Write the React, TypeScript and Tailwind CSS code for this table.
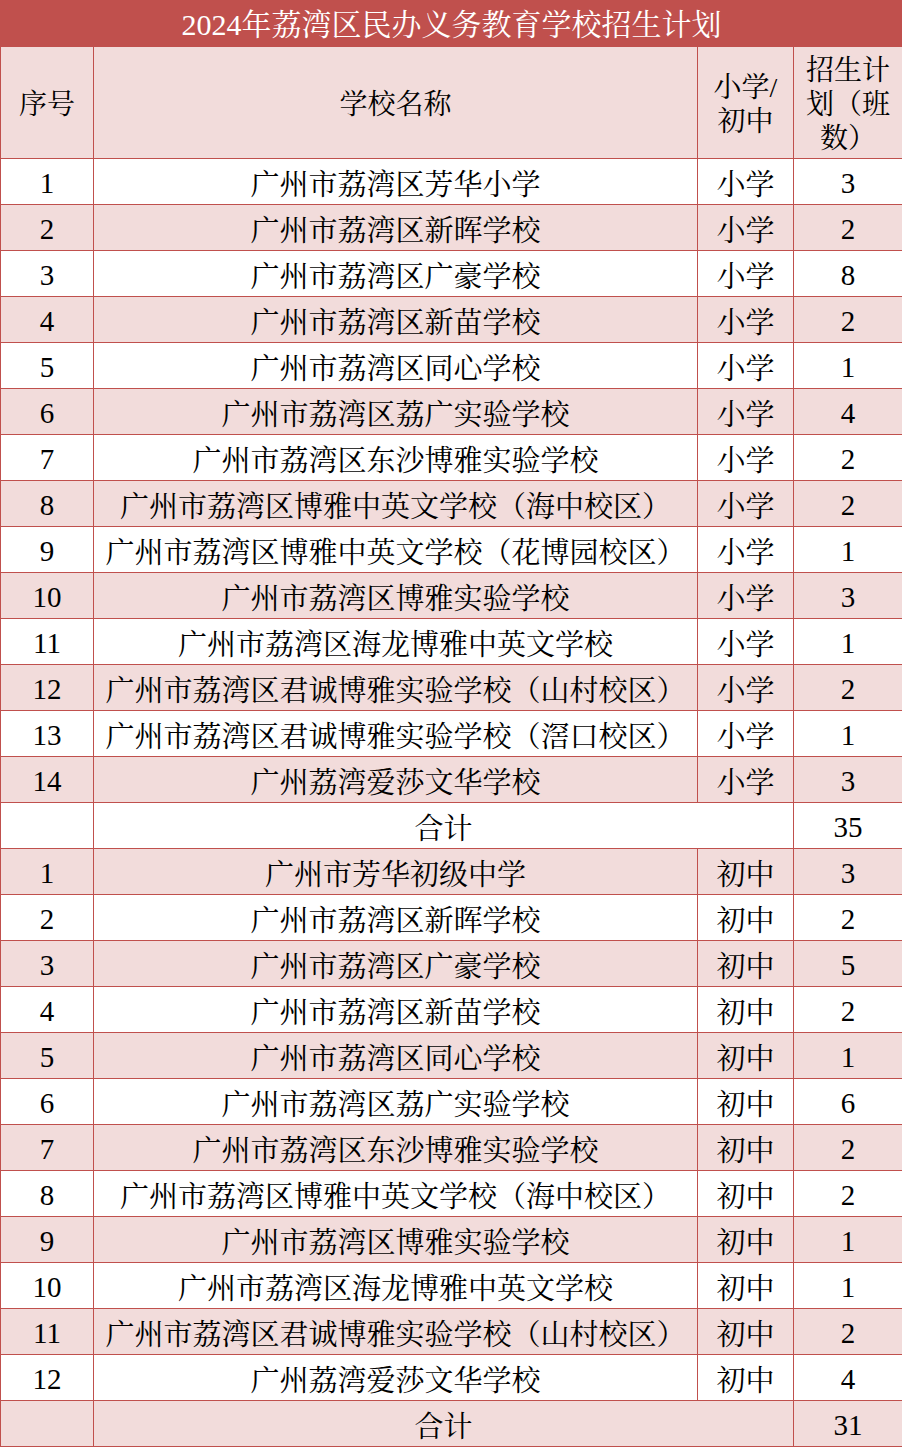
const primary: [string, number][] = [
  ["广州市荔湾区芳华小学", 3],
  ["广州市荔湾区新晖学校", 2],
  ["广州市荔湾区广豪学校", 8],
  ["广州市荔湾区新苗学校", 2],
  ["广州市荔湾区同心学校", 1],
  ["广州市荔湾区荔广实验学校", 4],
  ["广州市荔湾区东沙博雅实验学校", 2],
  ["广州市荔湾区博雅中英文学校（海中校区）", 2],
  ["广州市荔湾区博雅中英文学校（花博园校区）", 1],
  ["广州市荔湾区博雅实验学校", 3],
  ["广州市荔湾区海龙博雅中英文学校", 1],
  ["广州市荔湾区君诚博雅实验学校（山村校区）", 2],
  ["广州市荔湾区君诚博雅实验学校（滘口校区）", 1],
  ["广州荔湾爱莎文华学校", 3],
];

const junior: [string, number][] = [
  ["广州市芳华初级中学", 3],
  ["广州市荔湾区新晖学校", 2],
  ["广州市荔湾区广豪学校", 5],
  ["广州市荔湾区新苗学校", 2],
  ["广州市荔湾区同心学校", 1],
  ["广州市荔湾区荔广实验学校", 6],
  ["广州市荔湾区东沙博雅实验学校", 2],
  ["广州市荔湾区博雅中英文学校（海中校区）", 2],
  ["广州市荔湾区博雅实验学校", 1],
  ["广州市荔湾区海龙博雅中英文学校", 1],
  ["广州市荔湾区君诚博雅实验学校（山村校区）", 2],
  ["广州荔湾爱莎文华学校", 4],
];

type Row =
  | { kind: "school"; no: number; name: string; level: string; count: number }
  | { kind: "total"; count: number };

const rows: Row[] = [
  ...primary.map(([name, count], i) => ({ kind: "school" as const, no: i + 1, name, level: "小学", count })),
  { kind: "total", count: 35 },
  ...junior.map(([name, count], i) => ({ kind: "school" as const, no: i + 1, name, level: "初中", count })),
  { kind: "total", count: 31 },
];

const cell = "border border-[#c0504d] text-center align-middle p-0";

export default function App() {
  return (
    <div
      className="w-[902px] bg-white text-black"
      style={{ fontFamily: "'Liberation Serif', 'Noto Serif CJK SC', 'Noto Sans CJK SC', serif" }}
    >
      <table className="w-[902px] border-collapse table-fixed">
        <colgroup>
          <col className="w-[93px]" />
          <col className="w-[604px]" />
          <col className="w-[96px]" />
          <col className="w-[109px]" />
        </colgroup>
        <thead>
          <tr className="h-[46px]">
            <th
              colSpan={4}
              className="bg-[#c0504d] border border-[#c0504d] text-white text-[30px] font-normal leading-none text-center align-middle pt-[2px]"
            >
              2024年荔湾区民办义务教育学校招生计划
            </th>
          </tr>
          <tr className="h-[112px] bg-[#f2dcdb] text-[28px] leading-[34px]">
            <th className={`${cell} font-normal pt-[5px]`}>序号</th>
            <th className={`${cell} font-normal pt-[5px]`}>学校名称</th>
            <th className={`${cell} font-normal px-[8px] pt-[5px]`}>
              小学/
              <br />
              初中
            </th>
            <th className={`${cell} font-normal px-[8px] pt-[4px]`}>
              招生计
              <br />
              划（班
              <br />
              数）
            </th>
          </tr>
        </thead>
        <tbody className="text-[29px] leading-none">
          {rows.map((r, i) => {
            const bg = i % 2 === 1 ? "bg-[#f2dcdb]" : "bg-white";
            if (r.kind === "total") {
              return (
                <tr key={i} className={`h-[46px] ${bg}`}>
                  <td className={cell}></td>
                  <td colSpan={2} className={`${cell} pt-[7px]`}>
                    合计
                  </td>
                  <td className={`${cell} pt-[4px]`}>{r.count}</td>
                </tr>
              );
            }
            return (
              <tr key={i} className={`h-[46px] ${bg}`}>
                <td className={`${cell} pt-[4px]`}>{r.no}</td>
                <td className={`${cell} pt-[7px] whitespace-nowrap`}>{r.name}</td>
                <td className={`${cell} pt-[7px]`}>{r.level}</td>
                <td className={`${cell} pt-[4px]`}>{r.count}</td>
              </tr>
            );
          })}
        </tbody>
      </table>
    </div>
  );
}
